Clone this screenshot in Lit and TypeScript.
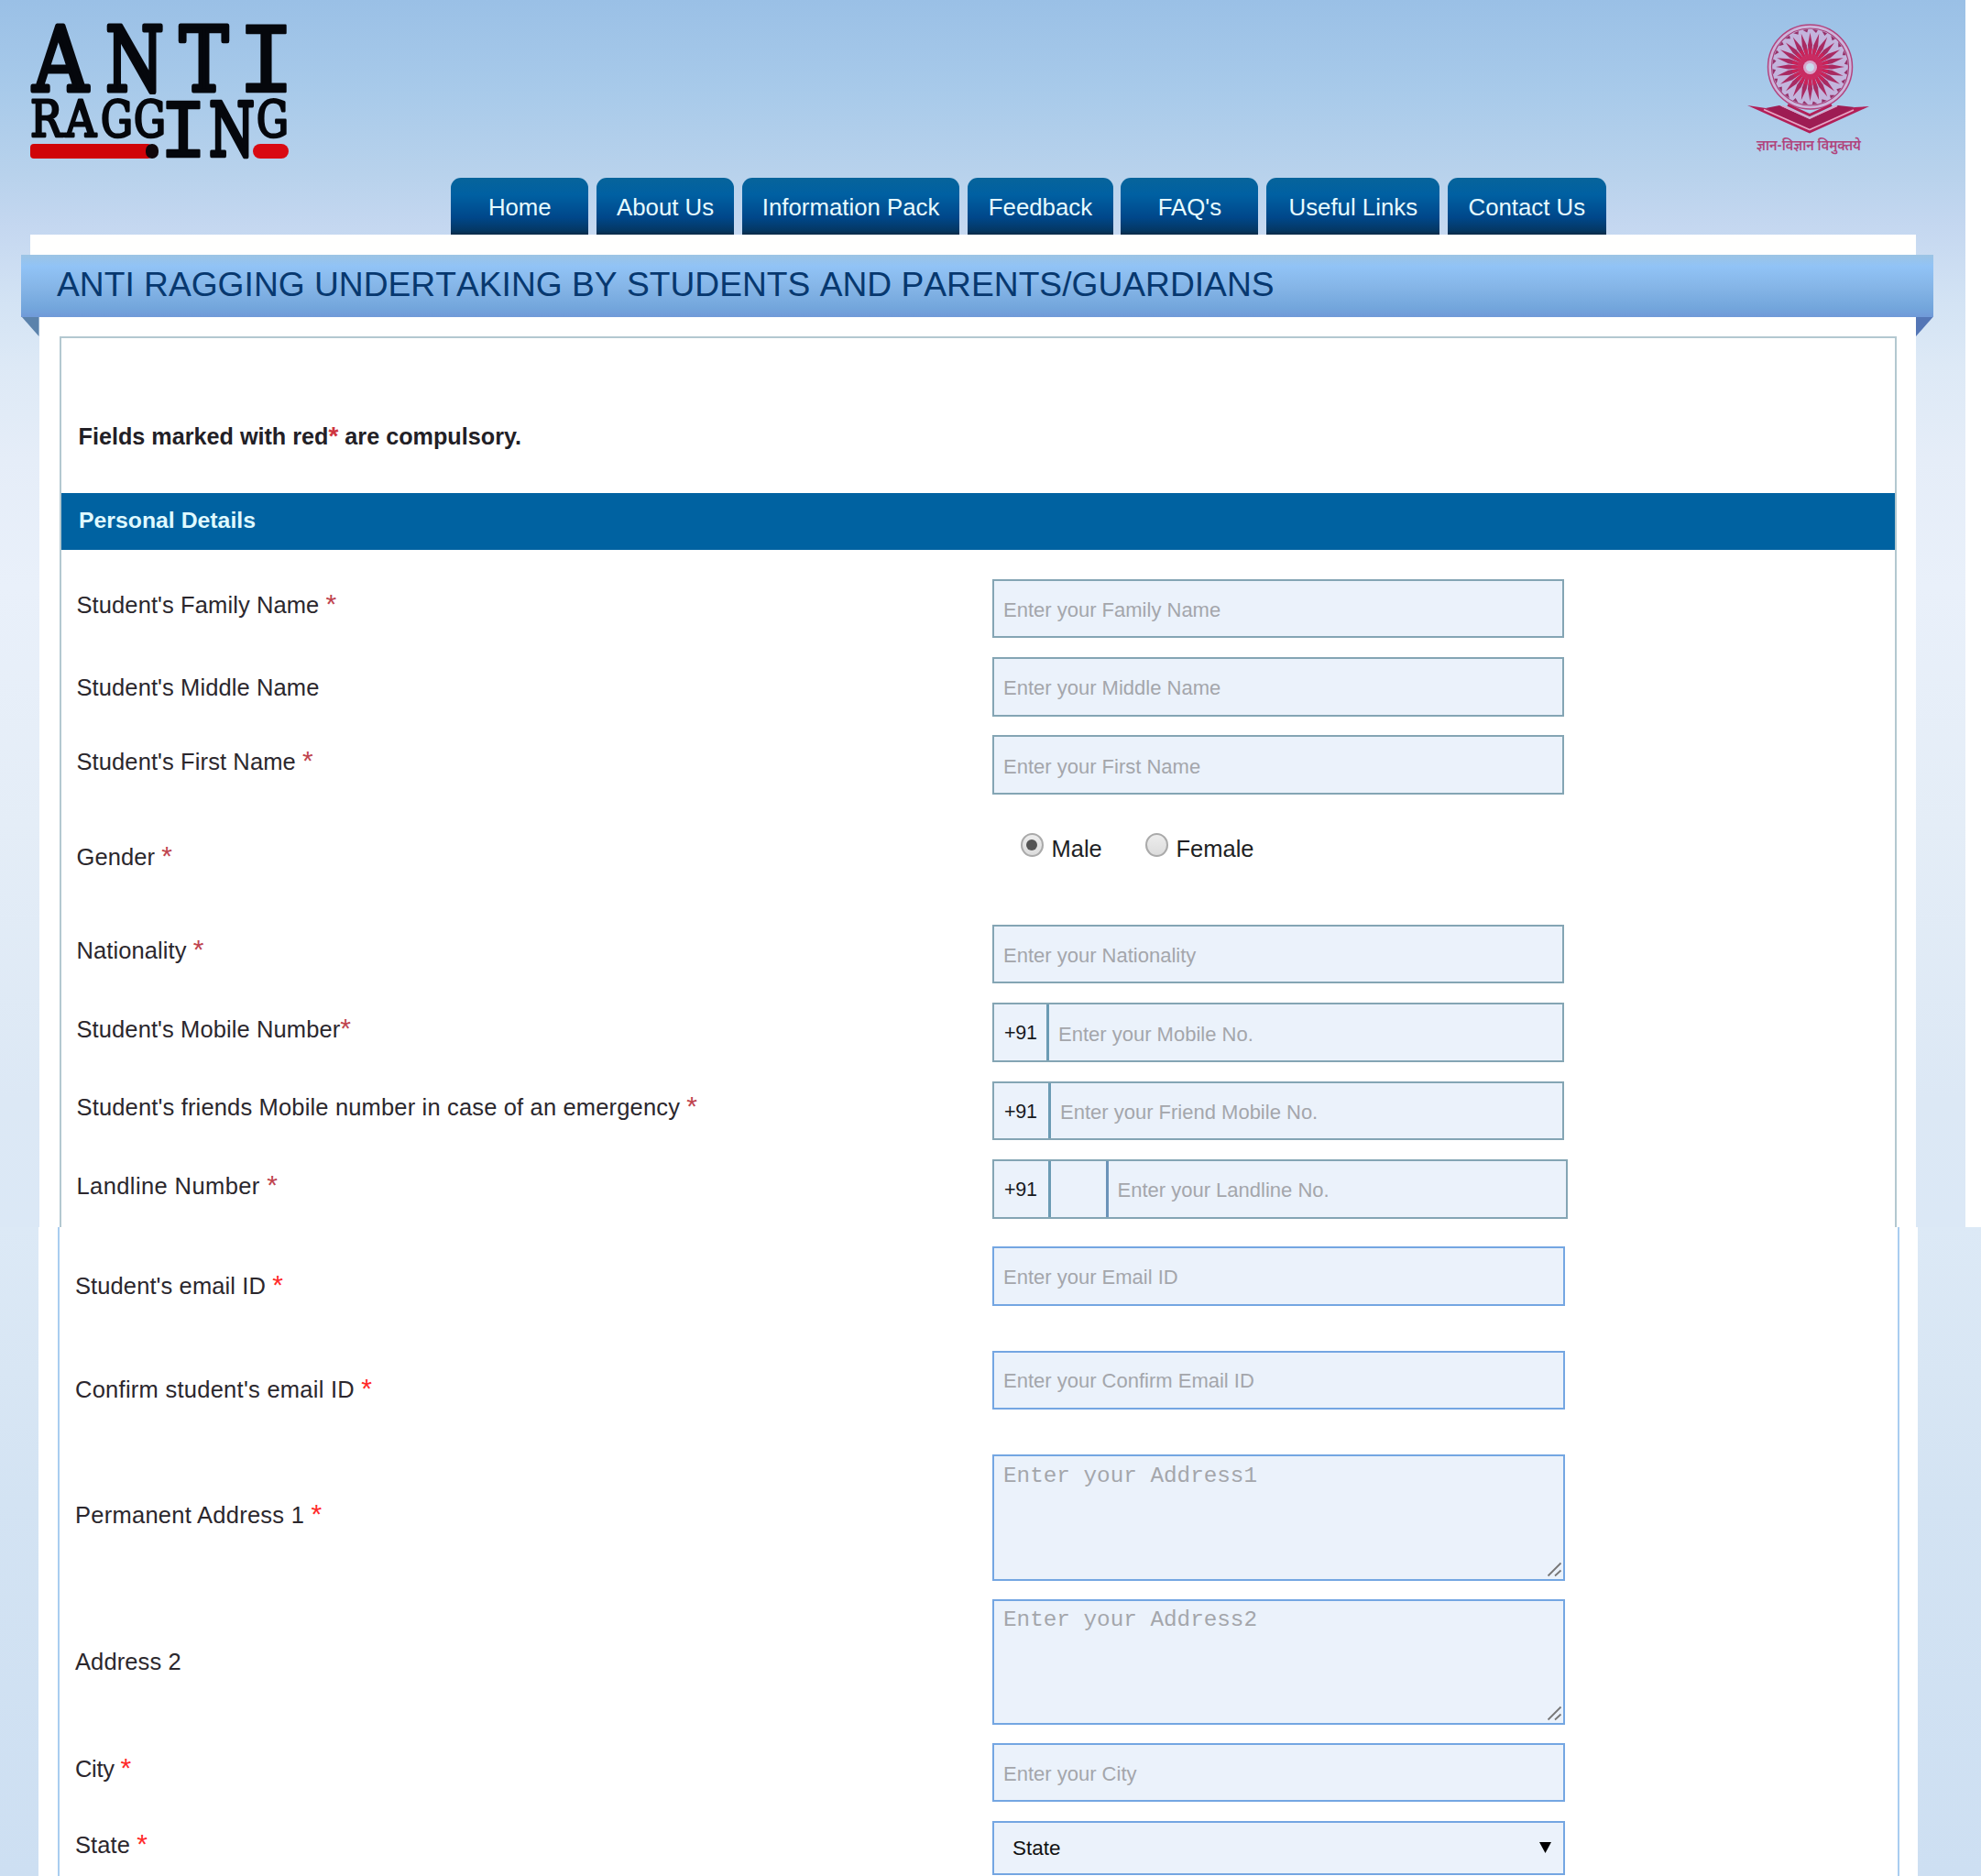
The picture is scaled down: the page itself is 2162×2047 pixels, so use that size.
import { LitElement, html, svg, css, nothing } from "lit";
import { customElement, property } from "lit/decorators.js";

type FieldKind = "text" | "area" | "gender" | "phone" | "select";

interface Field {
  label: string;
  kind: FieldKind;
  hint?: string;
  required?: boolean;
  tight?: boolean;
  variant?: string;
}

const TABS = [
  { text: "Home", size: "s" },
  { text: "About Us", size: "s" },
  { text: "Information Pack", size: "xl" },
  { text: "Feedback", size: "m" },
  { text: "FAQ's", size: "s" },
  { text: "Useful Links", size: "l" },
  { text: "Contact Us", size: "ml" },
];

const UPPER: Field[] = [
  { label: "Student's Family Name", kind: "text", hint: "Enter your Family Name", required: true },
  { label: "Student's Middle Name", kind: "text", hint: "Enter your Middle Name", variant: "middle" },
  { label: "Student's First Name", kind: "text", hint: "Enter your First Name", required: true },
  { label: "Gender", kind: "gender", required: true, variant: "gender-row" },
  { label: "Nationality", kind: "text", hint: "Enter your Nationality", required: true },
  { label: "Student's Mobile Number", kind: "phone", hint: "Enter your Mobile No.", required: true, tight: true, variant: "mobile" },
  { label: "Student's friends Mobile number in case of an emergency", kind: "phone", hint: "Enter your Friend Mobile No.", required: true, variant: "friend" },
  { label: "Landline Number", kind: "phone", hint: "Enter your Landline No.", required: true, variant: "landline" },
];

const LOWER: Field[] = [
  { label: "Student's email ID", kind: "text", hint: "Enter your Email ID", required: true, variant: "email" },
  { label: "Confirm student's email ID", kind: "text", hint: "Enter your Confirm Email ID", required: true, variant: "email wide" },
  { label: "Permanent Address 1", kind: "area", hint: "Enter your Address1", required: true, variant: "address wide" },
  { label: "Address 2", kind: "area", hint: "Enter your Address2", variant: "address second" },
  { label: "City", kind: "text", hint: "Enter your City", required: true, variant: "city" },
  { label: "State", kind: "select", hint: "State", required: true, variant: "state" },
];

@customElement("campaign-logo")
class CampaignLogo extends LitElement {
  static styles = css`
    :host { display: block; width: 290px; height: 156px; }
    svg { display: block; overflow: visible; }
    text { font-family: "DejaVu Serif", serif; fill: #05070c; stroke: #05070c; stroke-linejoin: round; }
    .big { font-size: 97px; stroke-width: 5; }
    .mid { font-size: 81px; stroke-width: 4.5; }
    .small { font-size: 54px; stroke-width: 2.8; }
    .bar-big { font-family: "Liberation Mono", monospace; font-size: 109px; stroke-width: 2.5; }
    .bar-mid { font-family: "Liberation Mono", monospace; font-size: 91px; stroke-width: 2.5; }
  `;
  render() {
    const glyph = (ch: string, cls: string, x: number, y: number, w: number) =>
      svg`<text class=${cls} x=${x} y=${y} textLength=${w} lengthAdjust="spacingAndGlyphs">${ch}</text>`;
    return html`<svg width="290" height="156" viewBox="0 0 290 156">
      <rect x="0" y="131" width="132" height="16" rx="4" fill="#d00408" />
      <rect x="126" y="131" width="14" height="16" rx="7" fill="#10060a" />
      <rect x="243" y="131" width="39" height="16" rx="8" fill="#d90a12" />
      ${glyph("A", "big", 3, 72.5, 60)}${glyph("N", "big", 82, 72.5, 64)}
      ${glyph("T", "big", 163, 72.5, 53)}${glyph("I", "bar-big", 226, 74, 63)}
      ${glyph("R", "small", 0, 122.5, 35)}${glyph("A", "small", 38, 122.5, 34)}
      ${glyph("G", "small", 77, 122.5, 35)}${glyph("G", "small", 113, 122.5, 35)}
      ${glyph("I", "bar-mid", 141, 145, 52)}${glyph("N", "mid", 195, 144, 50)}
      ${glyph("G", "small", 247, 122.5, 35)}
    </svg>`;
  }
}

@customElement("ugc-emblem")
class UgcEmblem extends LitElement {
  static styles = css`
    :host { display: block; width: 140px; height: 150px; }
    text { font-family: "Noto Sans Devanagari", "Noto Sans", sans-serif; font-size: 16px; font-weight: 600; fill: #b0447c; }
  `;
  render() {
    const spokes = Array.from({ length: 24 }, (_, i) => i * 15);
    return html`<svg width="140" height="150" viewBox="0 0 140 150">
      <circle cx="70.5" cy="51" r="46" fill="#cdb6dc" stroke="#b3447f" stroke-width="1.5" />
      <circle cx="70.5" cy="51" r="42" fill="#c3b5dd" stroke="#a83e78" stroke-width="1.2" />
      ${spokes.map(
        (a) => svg`<g transform="translate(0.5 0) rotate(${a} 70 51)">
          <path d="M69 45 L67.5 27 L70 13.5 L72.5 27 L71 45Z" fill="#a92a62" />
          <path d="M70 45 L68 31 L72 31Z" fill="#cb2258" />
          <path d="M72.5 10 L78.5 10.8 L76.5 14Z" fill="#963069" />
        </g>`,
      )}
      <circle cx="70.5" cy="51" r="14" fill="#cb2c62" opacity="0.85" />
      <circle cx="70.5" cy="51.5" r="7.5" fill="#d7a5cb" />
      <circle cx="70.5" cy="51.5" r="4.5" fill="#c9dcee" />
      <path d="M2 93 L70 123.5 L135 94 L119 95 L70 116 L22 96Z" fill="#b31f58" />
      <path d="M22 96 L37 93 L70 108 L101 93 L119 95 L70 121Z" fill="#9e1c53" />
      <path d="M20 97.5 L70 119.5 L118 98" fill="none" stroke="#e6a7c6" stroke-width="1.6" />
      <path d="M46 92.5 L70 103.5 L94 92.5" fill="none" stroke="#b31f58" stroke-width="3" />
      <path d="M40 93.5 L70 107 L100 93.5" fill="none" stroke="#dda5c8" stroke-width="1.4" />
      <text x="12" y="142" textLength="114" lengthAdjust="spacingAndGlyphs">ज्ञान-विज्ञान विमुक्तये</text>
    </svg>`;
  }
}

@customElement("form-row")
class FormRow extends LitElement {
  @property({ attribute: false }) field!: Field;

  static styles = css`
    :host { display: block; font-family: "Liberation Sans", Arial, sans-serif; }
    * { box-sizing: border-box; }
    .row { display: grid; grid-template-columns: var(--label-col) 1fr; height: 85.4px; }
    .label { font-size: 25.5px; line-height: 30px; letter-spacing: 0.1px; color: #2b272d; padding-top: 13.5px; white-space: nowrap; }
    .star { font-size: 30px; line-height: 1px; color: var(--star); }
    .middle .label { padding-top: 17.5px; }
    .friend .label { letter-spacing: 0.16px; }
    .landline .label { letter-spacing: 0.4px; }
    .wide .label { letter-spacing: 0.26px; }
    .box { position: relative; display: flex; width: var(--field-width); height: 64.5px; border: 2px solid var(--line); background: #ebf2fb; }
    .landline .box { width: 627.5px; }
    .entry, .area {
      display: block; flex: 1; min-width: 0; margin: 0; border: 0; outline: 0; background: transparent;
      color: #222; font-family: "Liberation Sans", Arial, sans-serif; font-size: 22px; padding: 4px 10px 0;
    }
    .entry::placeholder, .area::placeholder { color: #a4a6ab; opacity: 1; }
    .prefix { width: 60px; border-right: 3px solid #6b9bb4; padding: 3px 0 0 11px; color: #17191d; font-size: 21.5px; line-height: 57px; letter-spacing: -0.3px; }
    .friend .prefix, .landline .prefix { width: 62px; }
    .code { width: 62.5px; border-right: 3px solid #6b93b8; }
    .gender-row { height: 121px; }
    .gender-row .label { padding-top: 32px; }
    .choices { display: flex; gap: 51.5px; padding: 21px 0 0 30.5px; }
    .choice { display: flex; gap: 9px; font-size: 25.5px; line-height: 30px; color: #211f24; }
    .choice:first-child { width: 84.5px; }
    .dot {
      width: 25px; height: 26px; border-radius: 50%; border: 2px solid #aaa; flex: none; display: grid; place-items: center;
      background: linear-gradient(#ededed, #dcdcdc);
    }
    .on::after { content: ""; width: 12px; height: 12px; border-radius: 50%; background: #555; }
    .name { padding-top: 2.5px; }
    .email { height: 113.7px; }
    .email .label { padding-top: 27.5px; }
    .email .entry { padding-top: 2.5px; }
    .address { height: 157.3px; }
    .address .box { height: 137.5px; }
    .address .label { padding-top: 51px; }
    .second .label { padding-top: 53.5px; }
    .area { font-family: "Liberation Mono", "Courier New", monospace; font-size: 24.3px; line-height: 28px; padding: 7.5px 10px 5px; resize: none; height: 100%; }
    .grip { position: absolute; right: 1px; bottom: 2px; width: 17px; height: 17px; }
    .city .label { padding-top: 13.5px; letter-spacing: -0.3px; }
    .state .label { padding-top: 11px; }
    .state .box { height: 58.5px; align-items: center; justify-content: space-between; padding: 0 13px 0 20px; font-size: 22.5px; color: #111; }
    .arrow { width: 13px; height: 13px; display: block; }
  `;

  private control() {
    const f = this.field;
    switch (f.kind) {
      case "gender":
        return html`<div class="choices">
          <div class="choice"><span class="dot on"></span><span class="name">Male</span></div>
          <div class="choice"><span class="dot"></span><span class="name">Female</span></div>
        </div>`;
      case "area":
        return html`<div class="box"><textarea class="area" placeholder=${f.hint!}></textarea>
          <svg class="grip" viewBox="0 0 17 17"><path d="M1.5 15.5L15.5 1.5M9 15.5L15.5 9.5" stroke="#777" stroke-width="1.8" fill="none" /></svg></div>`;
      case "phone":
        return html`<div class="box">
          <span class="prefix">+91</span>
          ${f.variant === "landline" ? html`<span class="code"></span>` : nothing}
          <input class="entry" placeholder=${f.hint!} />
        </div>`;
      case "select":
        return html`<div class="box"><span>${f.hint}</span>
          <svg class="arrow" viewBox="0 0 14 14"><path d="M0 0H14L7 13Z" fill="#000" /></svg></div>`;
      default:
        return html`<div class="box"><input class="entry" placeholder=${f.hint!} /></div>`;
    }
  }

  render() {
    const f = this.field;
    const star = f.required ? html`${f.tight ? "" : " "}<span class="star">*</span>` : nothing;
    return html`<div class="row ${f.variant ?? ""}"><div class="label">${f.label}${star}</div>${this.control()}</div>`;
  }
}

@customElement("app-root")
class AppRoot extends LitElement {
  static styles = css`
    :host { display: block; width: 2162px; height: 2047px; overflow: hidden; background: #fff; font-family: "Liberation Sans", Arial, sans-serif; }
    * { box-sizing: border-box; }
    .upper {
      width: 2145px; height: 1339px; display: flex; flex-direction: column;
      background: linear-gradient(#9ac0e6 0, #a8caea 100px, #b8d2ec 190px, #c4d7f0 245px, #d3e3f4 330px, #dde9f6 400px, #e5edf8 500px, #e9f0fa 640px, #e4edf7 900px, #dce8f5 1200px, #dbe8f6 1339px);
    }
    .header { display: flex; justify-content: space-between; height: 194px; padding: 26px 100px 0 33px; flex: none; }
    .emblem { margin-top: -4px; }
    .tabs { display: flex; gap: 8.8px; height: 62px; margin-left: 492.3px; flex: none; }
    .tab {
      display: flex; align-items: center; justify-content: center; color: #e6fbff; font-size: 25.8px; padding-top: 3px; flex: none;
      border-radius: 11px 11px 0 0; background: linear-gradient(#07649b, #0060a2 30%, #00478a 70%, #043865 92%, #0b2c48); white-space: nowrap;
    }
    .s { width: 150px; }
    .m { width: 158.5px; }
    .ml { width: 172.5px; }
    .l { width: 189px; }
    .xl { width: 237.5px; }
    .strip { height: 21.5px; margin: 0 54px 0 33px; background: #fffffe; flex: none; }
    .ribbon {
      height: 68.5px; margin: 0 35.5px 0 23px; padding: 10.5px 0 0 39px; flex: none; color: #07386f; font-size: 37.2px; line-height: 44px; white-space: nowrap;
      background: linear-gradient(#9cc4e4, #91c3f6 18%, #86b6e8 50%, #73a6dc 85%, #7099d8); font-kerning: none;
    }
    .body { display: flex; flex: 1; min-height: 0; }
    .fold { width: 18.5px; height: 21px; flex: none; }
    .left { margin-left: 24px; background: #5b82ab; clip-path: polygon(0 0, 100% 0, 100% 100%); }
    .right { background: #5476b6; clip-path: polygon(0 0, 100% 0, 0 100%); }
    .sheet { width: 2048.5px; background: #fff; padding: 21px 21px 0 22px; display: flex; flex: none; }
    .frame { flex: 1; border: 2px solid #b3c8d0; border-bottom: 0; --label-col: 999.5px; --field-width: 624px; --line: #84a5b4; --star: #c0454f; }
    .note { margin: 0; height: 168.5px; padding: 91px 0 0 19px; font-size: 25.2px; line-height: 32px; font-weight: bold; color: #222026; }
    .mark { color: #cf3440; font-size: 28px; line-height: 1px; }
    .section { margin: 0; height: 62.5px; padding: 14.5px 0 0 19.5px; background: #0062a1; color: #dff9ff; font-size: 24.8px; line-height: 32px; }
    .rows { padding: 31.7px 0 0 17px; }
    .lower { height: 708px; display: flex; background: linear-gradient(#dce9f6, #d8e6f4 160px, #d3e3f3 300px, #cddff2); padding-left: 42px; }
    .lower-sheet { width: 2050.5px; background: #fff; padding: 0 20px 0 21px; display: flex; }
    .lower-frame { flex: 1; border: solid #a9cdf0; border-width: 0 2px; padding: 21px 0 0 17px; --label-col: 1001px; --field-width: 625px; --line: #74a6e2; --star: #ff2a2a; }
  `;

  render() {
    return html`
      <div class="upper">
        <div class="header"><campaign-logo></campaign-logo><ugc-emblem class="emblem"></ugc-emblem></div>
        <nav class="tabs">${TABS.map((t) => html`<span class="tab ${t.size}">${t.text}</span>`)}</nav>
        <div class="strip"></div>
        <div class="ribbon">ANTI RAGGING UNDERTAKING BY STUDENTS AND PARENTS/GUARDIANS</div>
        <div class="body">
          <div class="fold left"></div>
          <div class="sheet">
            <div class="frame">
              <p class="note">Fields marked with red<span class="mark">*</span> are compulsory.</p>
              <h2 class="section">Personal Details</h2>
              <div class="rows">${UPPER.map((f) => html`<form-row .field=${f}></form-row>`)}</div>
            </div>
          </div>
          <div class="fold right"></div>
        </div>
      </div>
      <div class="lower">
        <div class="lower-sheet">
          <div class="lower-frame">${LOWER.map((f) => html`<form-row .field=${f}></form-row>`)}</div>
        </div>
      </div>
    `;
  }
}
